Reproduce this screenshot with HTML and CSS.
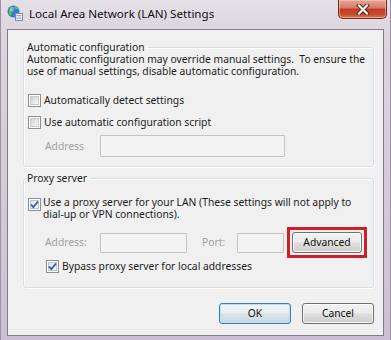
FILE: index.html
```html
<!DOCTYPE html>
<html>
<head>
<meta charset="utf-8">
<link rel="stylesheet" href="styles.css">
</head>
<body>
<div class="window">
  <div class="titlebar">
    <svg class="app-icon" width="16" height="16" viewBox="0 0 16 16">
      <circle cx="6.5" cy="6.5" r="6" fill="#2d7fd0"/>
      <path d="M2 4.5 C3.5 3 5 3.5 5.5 5 C6 6.5 4 7 4.5 9 C5 10.5 3 11 2 9.5 Z" fill="#6abf3a"/>
      <path d="M7 1.5 C9 1 11.5 2.5 12 4.5 C10.5 4.5 9 3.5 8 4 Z" fill="#7cc84a"/>
      <circle cx="5" cy="4" r="2.2" fill="#ffffff" opacity="0.35"/>
      <rect x="8.5" y="8.5" width="7" height="7" fill="#f7f9fc" stroke="#7a8ca8"/>
      <rect x="9.5" y="10.2" width="1.4" height="1" fill="#3b6fb5"/>
      <rect x="11.5" y="10.2" width="3" height="1" fill="#7a8ca8"/>
      <rect x="9.5" y="12.6" width="1.4" height="1" fill="#3b6fb5"/>
      <rect x="11.5" y="12.6" width="3" height="1" fill="#7a8ca8"/>
    </svg>
    <span class="title">Local Area Network (LAN) Settings</span>
    <div class="close">
      <svg width="14" height="11" viewBox="0 0 14 11">
        <path d="M3 1.5 L11 9.5 M11 1.5 L3 9.5" stroke="#5a1a14" stroke-width="4" stroke-linecap="square"/>
        <path d="M3 1.5 L11 9.5 M11 1.5 L3 9.5" stroke="#ffffff" stroke-width="2.2" stroke-linecap="square"/>
      </svg>
    </div>
  </div>

  <div class="client">
    <fieldset class="group auto-group">
      <legend>Automatic configuration</legend>
      <p class="desc">Automatic configuration may override manual settings.&nbsp; To ensure the<br>use of manual settings, disable automatic configuration.</p>
      <div class="check-row first-check">
        <span class="check"></span>
        <span class="check-label">Automatically detect settings</span>
      </div>
      <div class="check-row second-check">
        <span class="check"></span>
        <span class="check-label">Use automatic configuration script</span>
      </div>
      <div class="field-row script-row">
        <span class="field-label">Address</span>
        <span class="input script-input"></span>
      </div>
    </fieldset>

    <fieldset class="group proxy-group">
      <legend>Proxy server</legend>
      <div class="check-row proxy-check">
        <span class="check checked">
          <svg width="11" height="11" viewBox="0 0 11 11"><path d="M2 5.5 L4.3 8.2 L9 2.5" fill="none" stroke="#35589a" stroke-width="1.8"/></svg>
        </span>
        <span class="check-label multi">Use a proxy server for your LAN (These settings will not apply to<br>dial-up or VPN connections).</span>
      </div>
      <div class="field-row proxy-row">
        <span class="field-label">Address:</span>
        <span class="input addr-input"></span>
        <span class="field-label port-label">Port:</span>
        <span class="input port-input"></span>
        <span class="highlight"><span class="btn advanced">Advanced</span></span>
      </div>
      <div class="check-row bypass-check">
        <span class="check checked">
          <svg width="11" height="11" viewBox="0 0 11 11"><path d="M2 5.5 L4.3 8.2 L9 2.5" fill="none" stroke="#35589a" stroke-width="1.8"/></svg>
        </span>
        <span class="check-label">Bypass proxy server for local addresses</span>
      </div>
    </fieldset>

    <div class="buttons">
      <span class="btn default">OK</span>
      <span class="btn">Cancel</span>
    </div>
  </div>
</div>
</body>
</html>
```

FILE: styles.css
```css
* { box-sizing: border-box; }

html, body {
  margin: 0;
  padding: 0;
}

body {
  width: 391px;
  height: 340px;
  overflow: hidden;
  font-family: "Noto Sans", "Open Sans", sans-serif;
  font-size: 10.3px;
  color: #1b1b1b;
}

.window {
  width: 391px;
  height: 340px;
  display: flex;
  flex-direction: column;
  background: linear-gradient(180deg, #e4e1e6 0px, #dcd6df 30px, #cdbfd3 100%);
  border-left: 1px solid #9e90a6;
  border-right: 1px solid #9e90a6;
}

.titlebar {
  height: 29px;
  display: flex;
  align-items: flex-start;
  flex: none;
}

.app-icon {
  margin: 5px 0 0 6px;
  flex: none;
}

.title {
  margin: 5px 0 0 6px;
  font-size: 11.6px;
  line-height: 17px;
  color: #111;
  flex: 1;
}

.close {
  width: 49px;
  height: 19px;
  margin-right: 3px;
  border: 1px solid #6e2b22;
  border-top: none;
  border-radius: 0 0 5px 5px;
  background: linear-gradient(180deg, #e8a696 0%, #d47a66 45%, #c0392a 50%, #c94a2e 80%, #dd7a4c 100%);
  box-shadow: inset 0 0 0 1px rgba(255, 220, 210, 0.45);
  display: flex;
  align-items: center;
  justify-content: center;
}

.client {
  flex: 1;
  margin: 0 6px 4px 6px;
  border: 1px solid #85798c;
  background: #f0f0f0;
  padding: 11px 9px 0 15px;
  display: flex;
  flex-direction: column;
}

.group {
  margin: 0;
  padding: 0 3px 0 3px;
  border: 1px solid #d5dfe5;
  border-radius: 3px;
  box-shadow: inset 1px 1px 0 #ffffff, 1px 1px 0 #ffffff;
  min-width: 0;
}

.group legend {
  margin-left: 0;
  padding: 0 3px 0 0;
  line-height: 12px;
}

.desc {
  margin: 0;
  line-height: 12px;
  white-space: nowrap;
}

.check-row {
  display: flex;
  align-items: center;
  line-height: 13px;
  white-space: nowrap;
}

.check {
  width: 13px;
  height: 13px;
  flex: none;
  border: 1px solid #8e8f8f;
  background: #ffffff;
  padding: 1px;
  margin-left: 1px;
  margin-right: 3px;
  display: flex;
}

.check::before {
  content: "";
  flex: 1;
  border: 1px solid #c9c9c9;
  background: linear-gradient(135deg, #cfcfcf 0%, #e9e9e9 60%, #f7f7f7 100%);
}

.check.checked {
  position: relative;
}

.check.checked::before {
  border-color: #b9c6d6;
  background: linear-gradient(135deg, #dfe6ee 0%, #f1f4f8 100%);
}

.check.checked svg {
  position: absolute;
  left: 0;
  top: 0;
}

.first-check { margin-top: 17px; }
.second-check { margin-top: 9px; }

.field-row {
  display: flex;
  align-items: center;
}

.field-label {
  color: #a0a0a0;
  width: 55px;
  flex: none;
  line-height: 13px;
}

.script-row {
  margin: 6px 0 9px 18px;
}

.input {
  display: block;
  flex: none;
  border: 1px solid #c2c4c7;
  background: #f3f3f3;
  border-radius: 1px;
}

.script-input {
  width: 185px;
  height: 22px;
}

.proxy-group {
  margin-top: 5px;
}

.proxy-check {
  align-items: flex-start;
  margin-top: 12px;
}

.proxy-check .check {
  margin-top: 2px;
  margin-right: 2px;
}

.check-label.multi {
  line-height: 12px;
}

.proxy-row {
  margin: 12px 0 0 18px;
  height: 21px;
}

.addr-input {
  width: 87px;
  height: 20px;
}

.port-label {
  margin-left: 15px;
  width: 35px;
}

.port-input {
  width: 47px;
  height: 20px;
}

.highlight {
  margin-left: 8px;
  display: block;
  outline: 3px solid #cf1f2b;
  outline-offset: 2px;
}

.bypass-check {
  margin: 7px 0 14px 18px;
}

.btn {
  display: flex;
  align-items: center;
  justify-content: center;
  height: 21px;
  border: 1px solid #707070;
  border-radius: 3px;
  background: linear-gradient(180deg, #f2f2f2 0%, #ebebeb 48%, #dddddd 52%, #cfcfcf 100%);
  box-shadow: inset 0 0 0 1px rgba(255, 255, 255, 0.8);
  color: #111;
  line-height: 13px;
}

.advanced {
  width: 70px;
}

.buttons {
  display: flex;
  justify-content: flex-end;
  gap: 11px;
  margin-top: 15px;
}

.buttons .btn {
  width: 72px;
}

.btn.default {
  border-color: #3c7fb1;
  box-shadow: inset 0 0 0 1px #b9e1f5;
  background: linear-gradient(180deg, #f1f5f7 0%, #e8eef1 48%, #d9e3e8 52%, #cdd9df 100%);
}
```
